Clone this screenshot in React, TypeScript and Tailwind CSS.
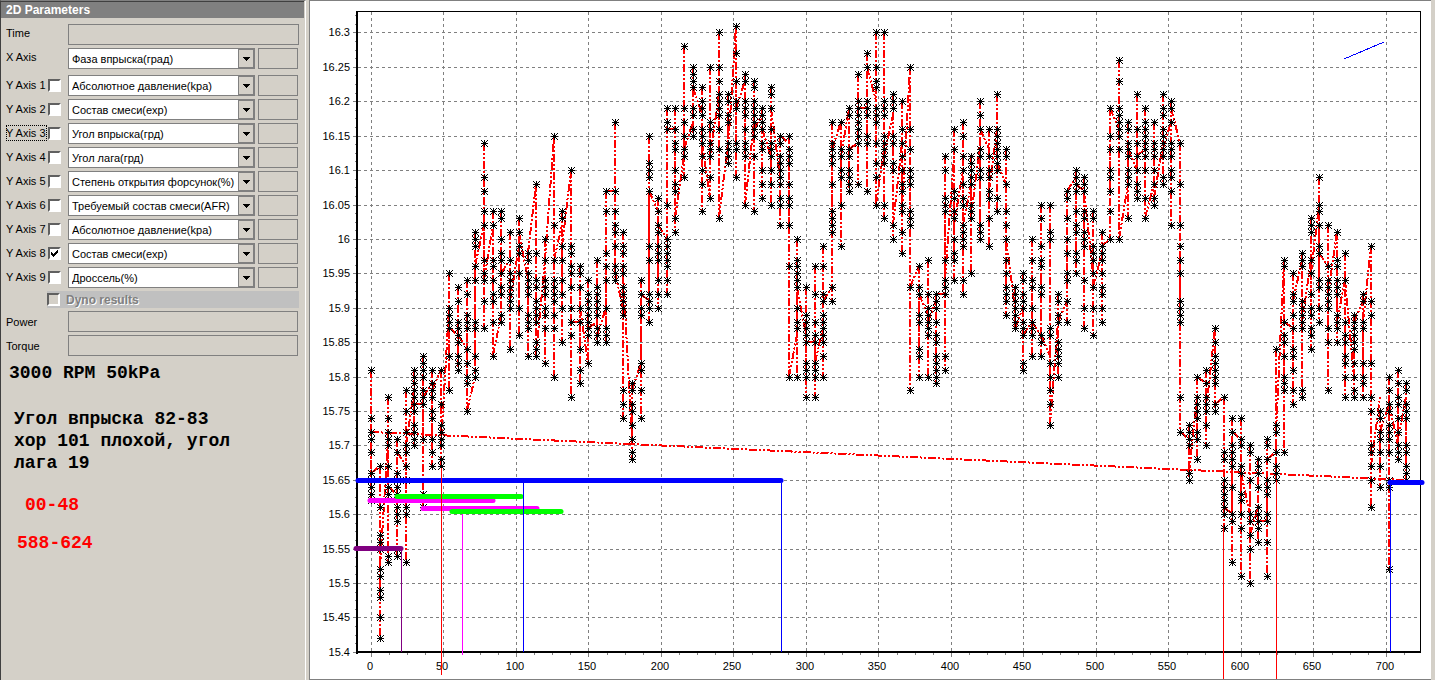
import { useState } from 'react';

interface Channel {
  label: string;
  source: string;
  checked: boolean;
}

interface Overlay {
  x1: number;
  x2: number;
  y: number;
  color: string;
}

const sources = [
  'Абсолютное давление(kpa)',
  'Состав смеси(exp)',
  'Угол впрыска(грд)',
  'Угол лага(грд)',
  'Степень открытия форсунок(%)',
  'Требуемый состав смеси(AFR)',
  'Дроссель(%)',
];

const initialChannels: Channel[] = [
  { label: 'Y Axis 1', source: sources[0], checked: false },
  { label: 'Y Axis 2', source: sources[1], checked: false },
  { label: 'Y Axis 3', source: sources[2], checked: false },
  { label: 'Y Axis 4', source: sources[3], checked: false },
  { label: 'Y Axis 5', source: sources[4], checked: false },
  { label: 'Y Axis 6', source: sources[5], checked: false },
  { label: 'Y Axis 7', source: sources[0], checked: false },
  { label: 'Y Axis 8', source: sources[1], checked: true },
  { label: 'Y Axis 9', source: sources[6], checked: false },
];

// One row per 6 degrees of phase: enter,exit:samples (hundredths of AFR above 15)
const log = `
65,66:81 74 72 71 69 66 65 64 63 62
67,52:67 61 57 56 55 52 51 49 48 45 42
71,64:77 74 72 71 70 67 64 63 54 53
63,69:71 69 66 65 64 63 61 60 59 55 54
67,70:78 75 72 70 69 67 65 61 60 53
78,76:81 80 79 78 77 76 75 73 72 71 70
76,77:83 82 81 80 78 77 76 71 63 61
79,78:81 79 78 77 75 74 71 69 67
81,70:81 76 73 72 71 70 68 67
90,87:95 90 89 88 87 83 78
86,86:93 91 88 87 86 85 83 82 81
84,75:94 92 89 88 87 84 82 80 79 75
80,96:101 100 99 96 94 88 87 83 81 80
102,94:114 109 107 104 102 97 95 94 91 87
102,83:104 102 97 96 94 92 91 88 83
89,95:104 103 100 98 97 95 93 92 89 88
97,91:101 97 95 94 93 92 91 90 84
99,101:103 101 99 98 95 90 86
94,98:98 97 95 94 93 92 89 88 87 83
108,83:108 98 94 93 91 90 89 88 85 84 83
97,97:100 97 94 93 92 90 89 87 82
115,97:115 102 97 94 93 92 91 89 87 80
102,99:104 103 99 97 94 92 90 85
110,88:110 99 98 96 95 93 90 88 86 77
88,90:96 95 93 90 88 84 81 79
82,87:94 92 91 90 89 88 87 86 82
88,86:97 93 92 91 90 89 87 86 85
90,107:107 104 98 96 94 90 87 86 85
107,95:117 107 104 102 101 99 96 95 94
90,95:101 99 98 96 95 93 92 91 90 89 78 76 74
71,78:79 78 76 75 73 71 69 68
82,92:94 92 90 89 82 81 78 74
91,107:115 111 110 109 107 99 97 92 91 90 88
104,102:106 104 102 101 99 98 97 94 92 90
100,116:119 117 116 105 100 99 98 97 96 94 92
116,103:119 116 114 113 110 108 107 103 101
112,113:128 119 117 115 113 112 109
117,122:125 124 123 122 119 118 116 115
118,114:122 120 119 118 116 115 114 112 110 108 104
106,112:125 117 116 114 113 112 109 106
121,103:130 125 123 121 120 119 118 116 113 103
114,113:121 120 118 117 114 113 112 111
131,119:131 127 123 120 119 114 113 109
123,105:124 123 120 119 118 116 114 113 112 105
117,116:123 122 120 119 118 117 116 115 112 104
118,116:119 118 117 116 114 113 110 108 106
112,119:122 121 119 116 114 113 112 110 108 105
109,115:115 114 112 111 110 109 108 106 105 102
114,80:115 113 112 111 108 106 105 102 96 80
86,93:100 97 96 95 94 93 90 88 87 80
86,85:93 89 88 87 86 85 82 81 80 77
85,82:96 92 88 86 85 82 81 80 77
87,91:99 96 92 91 89 88 87 86 85 83 80
93,113:117 114 113 112 111 108 104 103 102 101 93 91
117,112:117 113 112 110 109 105 99
119,113:119 118 113 112 110 109 108 107
114,119:124 120 119 118 117 116 115 114 108
119,125:127 125 120 119 118 115 114 107
120,105:130 125 123 122 119 118 117 114 111 109 105
113,112:130 120 119 118 115 114 113 112 111 105 103
118,102:121 120 119 115 114 111 110 102 100
114,104:120 116 114 112 110 108 107 105 104 101 98
125,93:125 116 113 110 109 108 104 103 102 93 78
96,92:96 93 92 89 88 84 83 80
89,88:97 92 90 89 88 87 86 80
91,92:92 91 90 88 86 85 83 82 81 80 79
92,94:112 110 106 105 104 97 94 93 92 83 81
112,102:116 113 107 106 104 103 100 98 97 94
110,102:117 115 112 110 108 106 105 102 101 100 99 94 92
108,103:112 111 110 109 108 105 104 103 95
114,116:120 118 116 113 112 110 109 102 101 100
113,107:116 112 110 109 107 106 103 99
116,111:121 116 115 114 113 112 111 110 106 104
108,100:113 112 108 104 102 100 97 95 93 92 91 89
90,87:93 92 91 90 89 88 87
90,86:95 94 92 91 90 88 87 86 82 81
88,88:100 97 94 93 90 88 87 86 83
86,86:105 103 99 97 96 93 92 86 85 83
83,73:105 101 100 87 86 82 80 78 76 73
88,88:92 91 89 88 85 84 83 82 80
91,107:107 106 103 100 98 95 94 91 88
109,108:110 109 108 107 104 102 101 98 97 95
107,107:109 108 107 104 103 101 100 99 94 90 87
95,93:104 103 99 98 97 95 93 90 86
98,99:101 99 98 97 95 93 92 90 88
100,119:119 115 113 110 109 107 104 100
116,100:126 123 119 118 117 116 115 113 100
108,113:117 116 114 113 112 110 109 108 103
110,112:121 116 114 112 110 108 107 106
113,103:119 117 116 115 114 113 112 110 106 103
108,106:117 114 113 112 110 108 106 105
114,113:121 119 118 116 115 114 113 112 109 108
117,119:120 119 117 114 113 112 110 109 107 102
114,72:114 108 102 99 97 95 91 90 89 88 77 72
71,66:73 72 71 70 66 65
77,80:80 77 76 75 74 72 71 68
79,75:81 79 77 76 75 73 70
87,76:87 85 83 82 81 80 79 76 75
77,61:77 69 68 65 64 63 62 61 60 58
60,72:74 72 70 69 68 67 64 60 59 53
71,66:74 71 70 67 66 63 62 60 58 51
60,57:70 69 65 60 59 57 55 50
61,59:68 67 66 64 61 60 59 58 56
59,68:71 70 68 65 64 63 60 59 56 51
69,72:84 73 72 69 67 66 65
97,88:97 96 88 86 85 83 80 79 78 69
87,91:95 92 91 89 87 84 83 81 78 76
97,88:98 97 96 91 90 89 88 87 78 77
97,95:103 102 101 97 95 92 90 89 87 86 84
105,98:109 105 104 102 99 98 94 93 90 88
96,92:102 96 94 93 92 91 90 87 85 78
101,88:101 97 96 94 93 92 89 88 87 85
94,94:98 94 88 86 85 83 82 80 77
80,88:89 88 87 86 85 84 82 80 78 77
91,88:92 91 88 87 82 80 79 77
99,67:99 91 89 82 77 75 70 69 67 65 61
77,72:75 74 72 71 69 67 64
76,76:80 78 76 75 73 72 71 69 65 64 52
70,71:81 79 77 76 74 72 70 69 68
77,65:79 78 76 75 74 70 69 67 66 65`;

const columns = log
  .trim()
  .split('\n')
  .map((line, i) => {
    const [ends, list] = line.split(':');
    const [enter, exit] = ends.split(',').map(Number);
    return { phase: i * 6, enter, exit, samples: list.split(' ').map(Number) };
  });

const px = (phase: number) => Math.round(370.9 + phase * 1.45);
const py = (value: number) => Math.round(651.9 - (value - 40) * 6.883);

// The full range is swept once, the dense middle twice, then a link to the next column
const tracePath = columns
  .map(({ phase, exit, samples }, i) => {
    const x = px(phase);
    const last = samples.length - 1;
    const top = py(samples[Math.floor(last * 0.4)]);
    const bottom = py(samples[Math.ceil(last * 0.7)]);
    const next = columns[i + 1];
    const link = next ? `M${x} ${py(exit)}L${px(next.phase)} ${py(next.enter)}` : '';
    return `M${x} ${py(samples[0])}V${py(samples[last])}M${x} ${bottom}V${top}${link}`;
  })
  .join('');

const markerPath = columns
  .flatMap(({ phase, samples }) =>
    samples.map((v) => {
      const x = px(phase);
      const y = py(v);
      return (
        `M${x - 3} ${y}h7v1h-7zM${x} ${y - 3}h1v7h-1zM${x - 1} ${y - 1}h3v3h-3z` +
        `M${x - 3} ${y - 3}h1v1h-1zM${x - 2} ${y - 2}h1v1h-1zM${x + 3} ${y - 3}h1v1h-1zM${x + 2} ${y - 2}h1v1h-1z` +
        `M${x - 3} ${y + 3}h1v1h-1zM${x - 2} ${y + 2}h1v1h-1zM${x + 3} ${y + 3}h1v1h-1zM${x + 2} ${y + 2}h1v1h-1z`
      );
    })
  )
  .join('');

const yTicks = Array.from({ length: 19 }, (_, i) => 40 + i * 5);
const xTicks = Array.from({ length: 15 }, (_, i) => i * 50);
const yMinor = Array.from({ length: 75 }, (_, i) => 40 + i * 1.25);
const xMinor = Array.from({ length: 58 }, (_, i) => i * 12.5);

const bars: Overlay[] = [
  { x1: 358, x2: 781, y: 480, color: '#0000ff' },
  { x1: 370, x2: 493, y: 500, color: '#ff00ff' },
  { x1: 397, x2: 521, y: 496, color: '#00ff00' },
  { x1: 423, x2: 537, y: 508, color: '#ff00ff' },
  { x1: 452, x2: 561, y: 511, color: '#00ff00' },
  { x1: 356, x2: 401, y: 548, color: '#800080' },
  { x1: 1390, x2: 1422, y: 482, color: '#0000ff' },
];

const cursors = [
  { x: 401, y1: 550, y2: 652, color: '#800080' },
  { x: 441, y1: 468, y2: 675, color: '#ff0000' },
  { x: 462, y1: 514, y2: 655, color: '#ff00ff' },
  { x: 523, y1: 483, y2: 652, color: '#0000ff' },
  { x: 781, y1: 483, y2: 652, color: '#0000ff' },
  { x: 1223, y1: 528, y2: 680, color: '#ff0000' },
  { x: 1276, y1: 480, y2: 680, color: '#ff0000' },
  { x: 1390, y1: 484, y2: 652, color: '#0000ff' },
];

function Chart() {
  return (
    <svg
      viewBox="310 1 1121 678"
      className="block w-full"
      role="img"
      fontFamily="'Liberation Sans', Arial, sans-serif"
      fontSize="11"
    >
      <g stroke="#808080" strokeDasharray="3 3" shapeRendering="crispEdges">
        {yTicks.map((v) => (
          <line key={v} x1="358" x2="1420" y1={py(v) + 0.5} y2={py(v) + 0.5} />
        ))}
        {xTicks.map((v) => (
          <line key={v} x1={px(v) + 0.5} x2={px(v) + 0.5} y1="12" y2="651" />
        ))}
      </g>
      <g stroke="#808080" shapeRendering="crispEdges">
        {yTicks.map((v) => (
          <line key={v} x1="353" x2="357" y1={py(v) + 0.5} y2={py(v) + 0.5} />
        ))}
        {yMinor.map((v) => (
          <line key={v} x1="355" x2="357" y1={py(v) + 0.5} y2={py(v) + 0.5} />
        ))}
        {xTicks.map((v) => (
          <line key={v} x1={px(v) + 0.5} x2={px(v) + 0.5} y1="653" y2="657" />
        ))}
        {xMinor.map((v) => (
          <line key={v} x1={px(v) + 0.5} x2={px(v) + 0.5} y1="653" y2="655" />
        ))}
      </g>
      <g fill="#000">
        {yTicks.map((v) => (
          <text key={v} x="350" y={py(v) + 4} textAnchor="end">
            {String((1500 + v) / 100)}
          </text>
        ))}
        {xTicks.map((v) => (
          <text key={v} x={px(v) - 1} y="670" textAnchor="middle">
            {v}
          </text>
        ))}
      </g>
      <g fill="#000" shapeRendering="crispEdges">
        <rect x="356" y="11" width="2" height="643" />
        <rect x="356" y="651" width="1065" height="2" />
        <rect x="356" y="11" width="1065" height="1" />
        <rect x="1420" y="11" width="1" height="642" />
      </g>
      <g fill="none" stroke="#ff0000" strokeWidth="2" strokeDasharray="8 2 2 2 2 2" shapeRendering="crispEdges">
        <path d={tracePath} />
        <line x1={px(0)} y1={py(72)} x2={px(714)} y2={py(65)} />
      </g>
      <path d={markerPath} fill="#000" shapeRendering="crispEdges" />
      {bars.map((b) => (
        <line
          key={`${b.x1}-${b.y}`}
          x1={b.x1}
          x2={b.x2}
          y1={b.y + 0.5}
          y2={b.y + 0.5}
          stroke={b.color}
          strokeWidth="5"
          strokeLinecap="round"
        />
      ))}
      {cursors.map((c) => (
        <rect key={c.x} x={c.x} y={c.y1} width="1" height={c.y2 - c.y1} fill={c.color} shapeRendering="crispEdges" />
      ))}
      <line x1="1344" y1="59" x2="1384" y2="42" stroke="#0000ff" shapeRendering="crispEdges" />
    </svg>
  );
}

function SourceSelect({
  id,
  value,
  options,
  onChange,
}: {
  id: string;
  value: string;
  options: string[];
  onChange: (value: string) => void;
}) {
  return (
    <div className="relative h-[21px] w-[187px] shrink-0">
      <select
        id={id}
        value={value}
        onChange={(e) => onChange(e.target.value)}
        className="block h-full w-full appearance-none rounded-none border border-[#808080] bg-white pl-[3px] pr-4 pt-px text-[11px] leading-4 text-black outline-none"
      >
        {options.map((o) => (
          <option key={o}>{o}</option>
        ))}
      </select>
      <span className="pointer-events-none absolute right-px top-px flex h-[19px] w-4 items-center justify-center border border-[#808080] bg-[#d4d0c8]">
        <svg width="7" height="4" viewBox="0 0 7 4" shapeRendering="crispEdges">
          <path d="M0 0h7v1h-1v1h-1v1h-1v1h-1v-1h-1v-1h-1v-1h-1z" />
        </svg>
      </span>
    </div>
  );
}

function CheckBox({
  id,
  label,
  checked,
  disabled,
  onChange,
}: {
  id: string;
  label: string;
  checked: boolean;
  disabled?: boolean;
  onChange?: (checked: boolean) => void;
}) {
  return (
    <span className="relative block size-[13px] shrink-0">
      <input
        id={id}
        aria-label={label}
        type="checkbox"
        checked={checked}
        disabled={disabled}
        onChange={(e) => onChange?.(e.target.checked)}
        className="block size-full appearance-none border-2 border-b-white border-l-[#606060] border-r-white border-t-[#606060] bg-white disabled:bg-[#d4d0c8]"
      />
      {checked && (
        <svg className="pointer-events-none absolute left-[3px] top-[3px]" width="7" height="7" shapeRendering="crispEdges">
          <path d="M0 2h1v1h1v1h1v-1h1v-1h1v-1h1v-1h1v3h-1v1h-1v1h-1v1h-1v1h-1v-1h-1v-1h-1z" />
        </svg>
      )}
    </span>
  );
}

const fieldClass = 'block h-[21px] rounded-none border border-[#808080] bg-transparent px-1 outline-none';

export default function App() {
  const [xSource, setXSource] = useState('Фаза впрыска(град)');
  const [channels, setChannels] = useState(initialChannels);

  const update = (index: number, patch: Partial<Channel>) => {
    setChannels(channels.map((c, i) => (i === index ? { ...c, ...patch } : c)));
  };

  return (
    <div className="flex min-h-screen items-stretch bg-[#d4d0c8] font-['Liberation_Sans',Arial,sans-serif] text-[11px] leading-4 text-black">
      <aside className="w-[306px] shrink-0 border-l border-r border-t border-l-[#404040] border-r-white border-t-[#808080]">
        <h1 className="mr-px h-[17px] border-t border-[#404040] bg-[#808080] pl-[5px] text-xs font-bold leading-4 text-white">
          2D Parameters
        </h1>

        <div className="pl-[5px] pt-[6px]">
          <div className="flex h-6 items-start">
            <label htmlFor="time" className="w-[62px] pt-px">Time</label>
            <input id="time" readOnly className={`${fieldClass} w-[231px]`} />
          </div>
          <div className="mb-[3px] flex h-6 items-start">
            <label htmlFor="x-axis" className="w-[62px] pt-px">X Axis</label>
            <SourceSelect id="x-axis" value={xSource} options={['Фаза впрыска(град)', ...sources]} onChange={setXSource} />
            <input aria-label="X Axis value" readOnly className={`${fieldClass} ml-[3px] w-10`} />
          </div>

          {channels.map((c, i) => (
            <div key={c.label} className="flex h-6 items-start">
              <div className="flex h-5 w-[62px] items-center">
                <label
                  htmlFor={`source-${i}`}
                  className={`mr-px flex h-4 w-[41px] items-center whitespace-nowrap ${
                    i === 2 ? 'outline-1 -outline-offset-1 outline-dotted outline-black' : ''
                  }`}
                >
                  {c.label}
                </label>
                <CheckBox
                  id={`show-${i}`}
                  label={`Show ${c.label}`}
                  checked={c.checked}
                  onChange={(checked) => update(i, { checked })}
                />
              </div>
              <SourceSelect
                id={`source-${i}`}
                value={c.source}
                options={sources}
                onChange={(source) => update(i, { source })}
              />
              <input aria-label={`${c.label} value`} readOnly className={`${fieldClass} ml-[3px] w-10`} />
            </div>
          ))}

          <div className="mb-[3px] ml-[41px] flex h-[17px] w-[252px] items-center bg-[#c0c0c0]">
            <CheckBox id="dyno" label="Dyno results" checked={false} disabled />
            <label htmlFor="dyno" className="pl-[6px] text-xs font-bold leading-4 text-[#808080] [text-shadow:1px_1px_0_#fff]">
              Dyno results
            </label>
          </div>

          <div className="flex h-6 items-start">
            <label htmlFor="power" className="w-[62px] pt-[3px]">Power</label>
            <input id="power" readOnly className={`${fieldClass} w-[230px]`} />
          </div>
          <div className="flex h-6 items-start">
            <label htmlFor="torque" className="w-[62px] pt-[3px]">Torque</label>
            <input id="torque" readOnly className={`${fieldClass} w-[230px]`} />
          </div>
        </div>

        <div className="pl-2 pt-[3px] font-['Liberation_Mono','Courier_New',monospace] text-lg font-bold leading-[22px]">
          <p>3000 RPM 50kPa</p>
          <p className="mt-6 w-[230px] pl-[5px]">Угол впрыска 82-83 хор 101 плохой, угол лага 19</p>
          <p className="mt-5 pl-4 text-[#ff0000]">00-48</p>
          <p className="mt-4 pl-2 text-[#ff0000]">588-624</p>
        </div>
      </aside>

      <main className="ml-[3px] mr-1 min-w-0 flex-1 border-b border-l border-t border-[#808080] bg-white">
        <Chart />
      </main>
    </div>
  );
}
